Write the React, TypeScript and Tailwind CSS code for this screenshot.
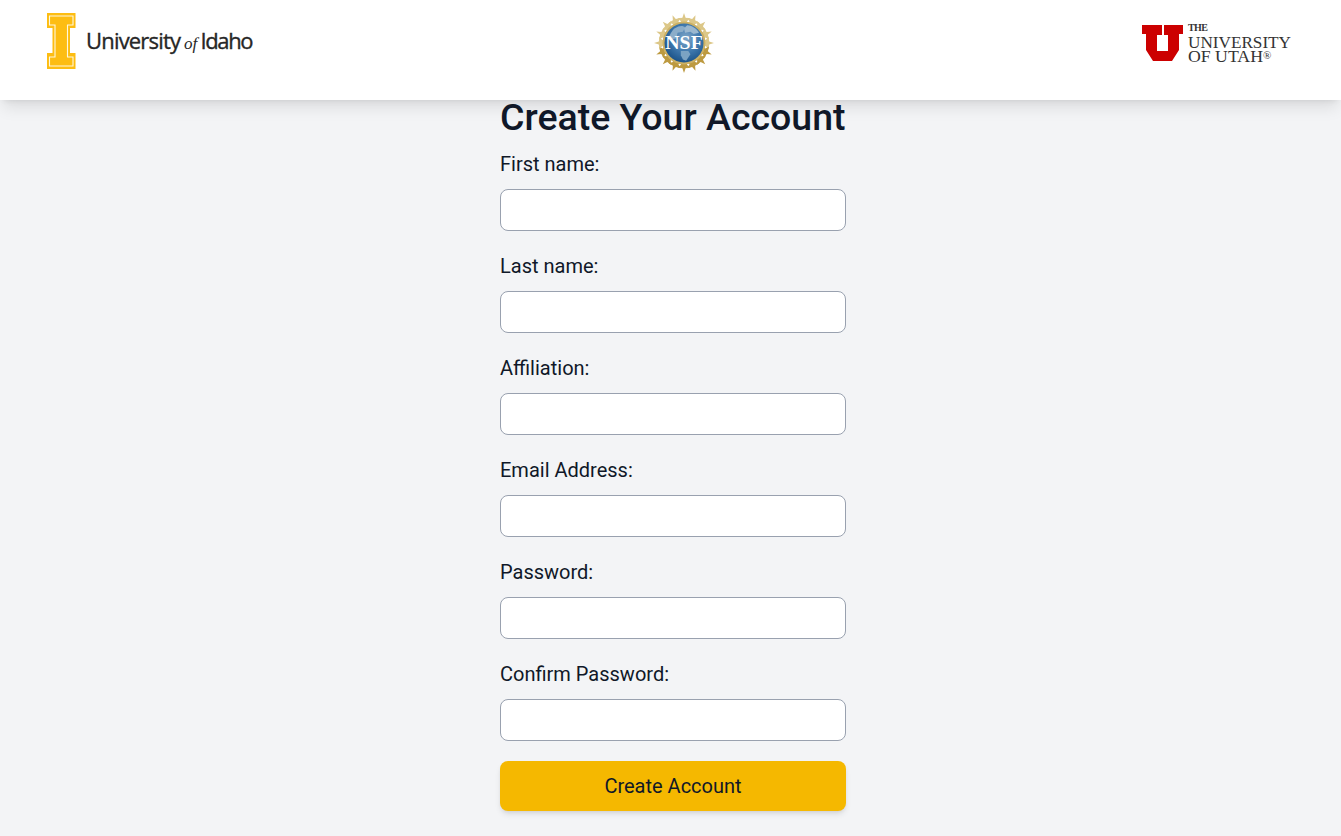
import React from 'react'

const fields = ['First name:', 'Last name:', 'Affiliation:', 'Email Address:', 'Password:', 'Confirm Password:']

// gold stars round the NSF globe
const rays = Array.from({ length: 16 }, (_, i) => (i * 360) / 16)

const IdahoLogo = () => (
  <svg width="206" height="60" viewBox="47 13 206 60" className="block shrink-0">
    <path d="M47 13h28.5v15h-5.5v25h5.5v16H47V53h5.5V28H47z" fill="#fdbd12" />
    <path
      d="M49.5 16H73v9h-5.5v32H73v9H49.5v-9H55V25h-5.5z"
      fill="none"
      stroke="#fff8dc"
      strokeWidth="1.1"
    />
    <text
      x="86"
      y="48.5"
      fontFamily="'Open Sans', sans-serif"
      fontSize="22"
      fill="#262626"
      stroke="#262626"
      strokeWidth="0.35"
      textLength="95"
    >
      University
    </text>
    <text
      x="184"
      y="48.5"
      fontFamily="'Liberation Serif', serif"
      fontStyle="italic"
      fontSize="17"
      fill="#262626"
    >
      of
    </text>
    <text
      x="200.5"
      y="48.5"
      fontFamily="'Open Sans', sans-serif"
      fontSize="22"
      fill="#262626"
      stroke="#262626"
      strokeWidth="0.35"
      textLength="53"
    >
      Idaho
    </text>
  </svg>
)

const NsfLogo = () => (
  <svg width="60" height="60" viewBox="2 1.5 56 56" className="block shrink-0">
    <defs>
      <radialGradient id="globe" cx="55%" cy="38%" r="70%">
        <stop offset="0%" stopColor="#7fa6c8" />
        <stop offset="50%" stopColor="#3f78ad" />
        <stop offset="100%" stopColor="#134a80" />
      </radialGradient>
    </defs>
    {rays.map((deg) => (
      <g key={deg} transform={`rotate(${deg} 30 29.5)`}>
        <path
          d="M30 1.5l1.5 4.5 4.5.6-3.2 2.6 1.7 4.8h-9l1.7-4.8-3.2-2.6 4.5-.6z"
          fill={deg > 90 && deg < 270 ? '#bd9a40' : '#dcc788'}
        />
      </g>
    ))}
    <circle cx="30" cy="29.5" r="20" fill="#cdb164" />
    <circle cx="30" cy="29.5" r="18.2" fill="url(#globe)" />
    <path d="M21 16c5-3 8-3 10-1l-2 4-5 1-1 5-4 1-3-2c1-3 3-6 5-8z" fill="#8cadc9" />
    <path d="M33 13c4 0 9 3 11 7l-5 1-3-2-5 1-1-4z" fill="#9ab7cf" />
    <path d="M27 37l7 0 2 3-4 6-3-1-2-4z" fill="#7ba3c3" />
    <text
      x="12.5"
      y="35.5"
      fontFamily="'Liberation Serif', serif"
      fontWeight="700"
      fontSize="18.5"
      fill="#ffffff"
      textLength="35"
    >
      NSF
    </text>
  </svg>
)

const UtahLogo = () => (
  <svg width="176" height="56" viewBox="1115 13 176 56" className="block shrink-0">
    <path
      d="M1142 25H1162V35H1157V51H1168V35H1164V25H1183V34H1179V50L1172 61H1153L1146 50V34H1142Z"
      fill="#cc0000"
    />
    <text
      x="1188"
      y="31"
      fontFamily="'Liberation Serif', serif"
      fontWeight="700"
      fontSize="10"
      fill="#333333"
      textLength="20"
    >
      THE
    </text>
    <text
      x="1188"
      y="47.5"
      fontFamily="'Liberation Serif', serif"
      fontSize="17"
      fill="#333333"
      textLength="103"
      lengthAdjust="spacingAndGlyphs"
    >
      UNIVERSITY
    </text>
    <text
      x="1188"
      y="61.5"
      fontFamily="'Liberation Serif', serif"
      fontSize="17"
      fill="#333333"
      textLength="75"
      lengthAdjust="spacingAndGlyphs"
    >
      OF UTAH
    </text>
    <text x="1263" y="58.5" fontFamily="'Liberation Serif', serif" fontSize="11" fill="#333333">
      ®
    </text>
  </svg>
)

export default function App() {
  return (
    <div className="min-h-[836px] bg-gray-100 font-['Roboto',sans-serif] text-gray-900">
      <header className="relative flex h-[100px] items-start justify-between bg-white pt-[13px] pl-[47px] pr-[50px] shadow-lg">
        <IdahoLogo />
        <NsfLogo />
        <UtahLogo />
      </header>

      <main className="relative ml-[500px] -mt-[3px] w-[346px]">
        <h1 className="text-[37.5px] leading-10 font-medium">Create Your Account</h1>
        <form className="mt-[13px]">
          {fields.map((label) => (
            <div key={label} className="mb-[21px]">
              <label className="block text-xl leading-7">{label}</label>
              <input
                type={label.includes('Password') ? 'password' : 'text'}
                className="mt-[11px] block h-[42px] w-full rounded-lg border border-gray-400 bg-white px-3"
              />
            </div>
          ))}
          <button
            type="button"
            className="-mt-px block h-[50px] w-full rounded-lg bg-[#f5b800] text-xl text-gray-900 shadow-md"
          >
            Create Account
          </button>
        </form>
      </main>
    </div>
  )
}
